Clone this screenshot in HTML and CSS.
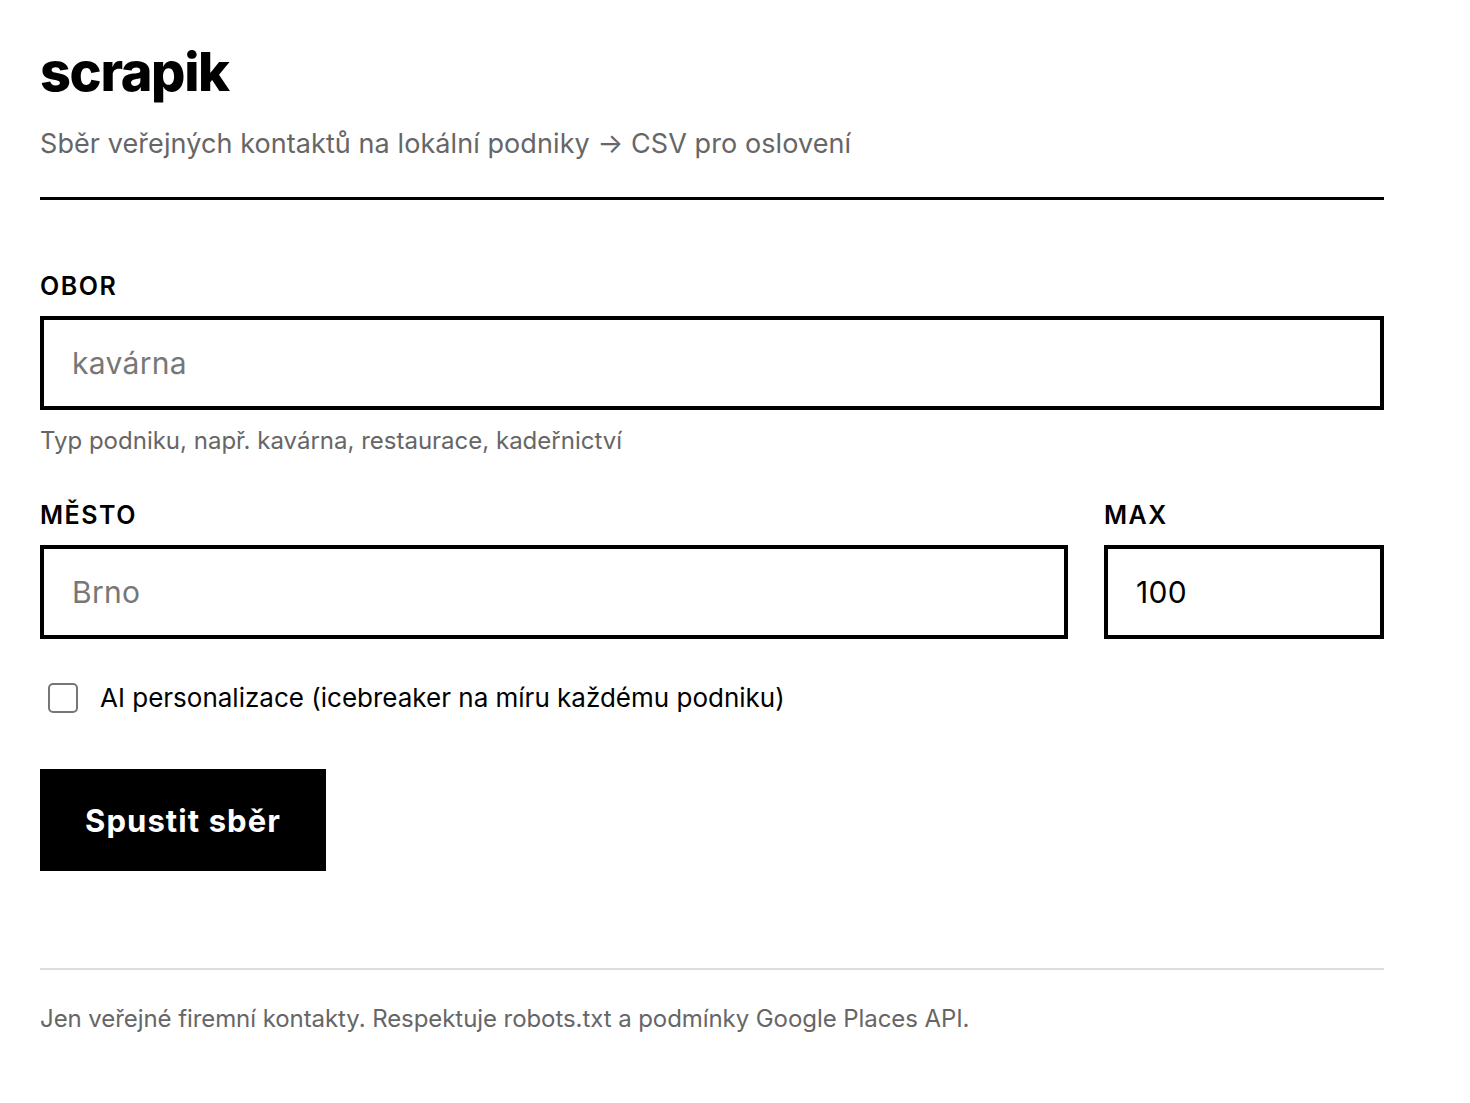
FILE: index.html
```html
<!DOCTYPE html>
<html lang="cs">
<head>
<meta charset="utf-8">
<title>scrapik</title>
<link rel="stylesheet" href="styles.css">
</head>
<body>
<main class="page">
  <header class="head">
    <h1 class="logo">scrapik</h1>
    <p class="tagline">Sběr veřejných kontaktů na lokální podniky → CSV pro oslovení</p>
  </header>
  <form class="form">
    <div class="field">
      <label class="label" for="obor">OBOR</label>
      <input class="input" id="obor" type="text" placeholder="kavárna">
      <p class="hint">Typ podniku, např. kavárna, restaurace, kadeřnictví</p>
    </div>
    <div class="row">
      <div class="field">
        <label class="label" for="mesto">MĚSTO</label>
        <input class="input" id="mesto" type="text" placeholder="Brno">
      </div>
      <div class="field">
        <label class="label" for="max">MAX</label>
        <input class="input" id="max" type="text" value="100">
      </div>
    </div>
    <label class="check">
      <input class="box" type="checkbox">
      <span>AI personalizace (icebreaker na míru každému podniku)</span>
    </label>
    <button class="btn" type="button">Spustit sběr</button>
  </form>
  <footer class="foot">
    <p>Jen veřejné firemní kontakty. Respektuje robots.txt a podmínky Google Places API.</p>
  </footer>
</main>
</body>
</html>
```

FILE: styles.css
```css
* { box-sizing: border-box; }
html, body { margin: 0; padding: 0; background: #ffffff; }
body {
  font-family: Inter, "Noto Sans", "Liberation Sans", sans-serif;
  color: #000;
}
.page {
  width: 1344px;
  margin-left: 40px;
  padding-top: 40px;
}
.head {
  border-bottom: 3px solid #000;
  padding-bottom: 35px;
}
.logo {
  margin: 0;
  font-size: 54px;
  line-height: 64px;
  font-weight: 800;
  letter-spacing: -0.025em;
}
.tagline {
  margin: 22px 0 0;
  font-size: 27px;
  line-height: 36px;
  letter-spacing: 0.003em;
  color: #666;
}
.form {
  display: flex;
  flex-direction: column;
  padding-top: 71px;
}
.field {
  display: flex;
  flex-direction: column;
}
.label {
  font-size: 25px;
  line-height: 30px;
  font-weight: 600;
  letter-spacing: 0.06em;
  margin-bottom: 15px;
}
.input {
  height: 94px;
  border: 4px solid #000;
  border-radius: 0;
  padding: 0 28px;
  font-family: inherit;
  font-size: 30px;
  letter-spacing: 0.01em;
  color: #000;
  background: #fff;
  outline: none;
}
.input::placeholder { color: #777; }
.hint {
  margin: 16px 0 0;
  font-size: 24px;
  line-height: 30px;
  color: #666;
}
.row {
  display: grid;
  grid-template-columns: 1fr 280px;
  gap: 36px;
  margin-top: 44px;
}
.check {
  display: flex;
  align-items: center;
  gap: 22px;
  margin-top: 44px;
  padding-left: 8px;
  font-size: 26px;
  line-height: 30px;
}
.box {
  appearance: none;
  -webkit-appearance: none;
  margin: 0;
  width: 30px;
  height: 30px;
  border: 2px solid #767676;
  border-radius: 5px;
  background: #fff;
}
.btn {
  align-self: flex-start;
  margin-top: 56px;
  height: 102px;
  padding: 0 45px;
  background: #000;
  color: #fff;
  border: 0;
  border-radius: 0;
  font-family: inherit;
  font-size: 31px;
  font-weight: 700;
  letter-spacing: 0.035em;
}
.foot {
  margin-top: 97px;
  border-top: 2px solid #dddddd;
  padding-top: 34px;
}
.foot p {
  margin: 0;
  font-size: 24px;
  line-height: 30px;
  letter-spacing: -0.003em;
  color: #666;
}
```
